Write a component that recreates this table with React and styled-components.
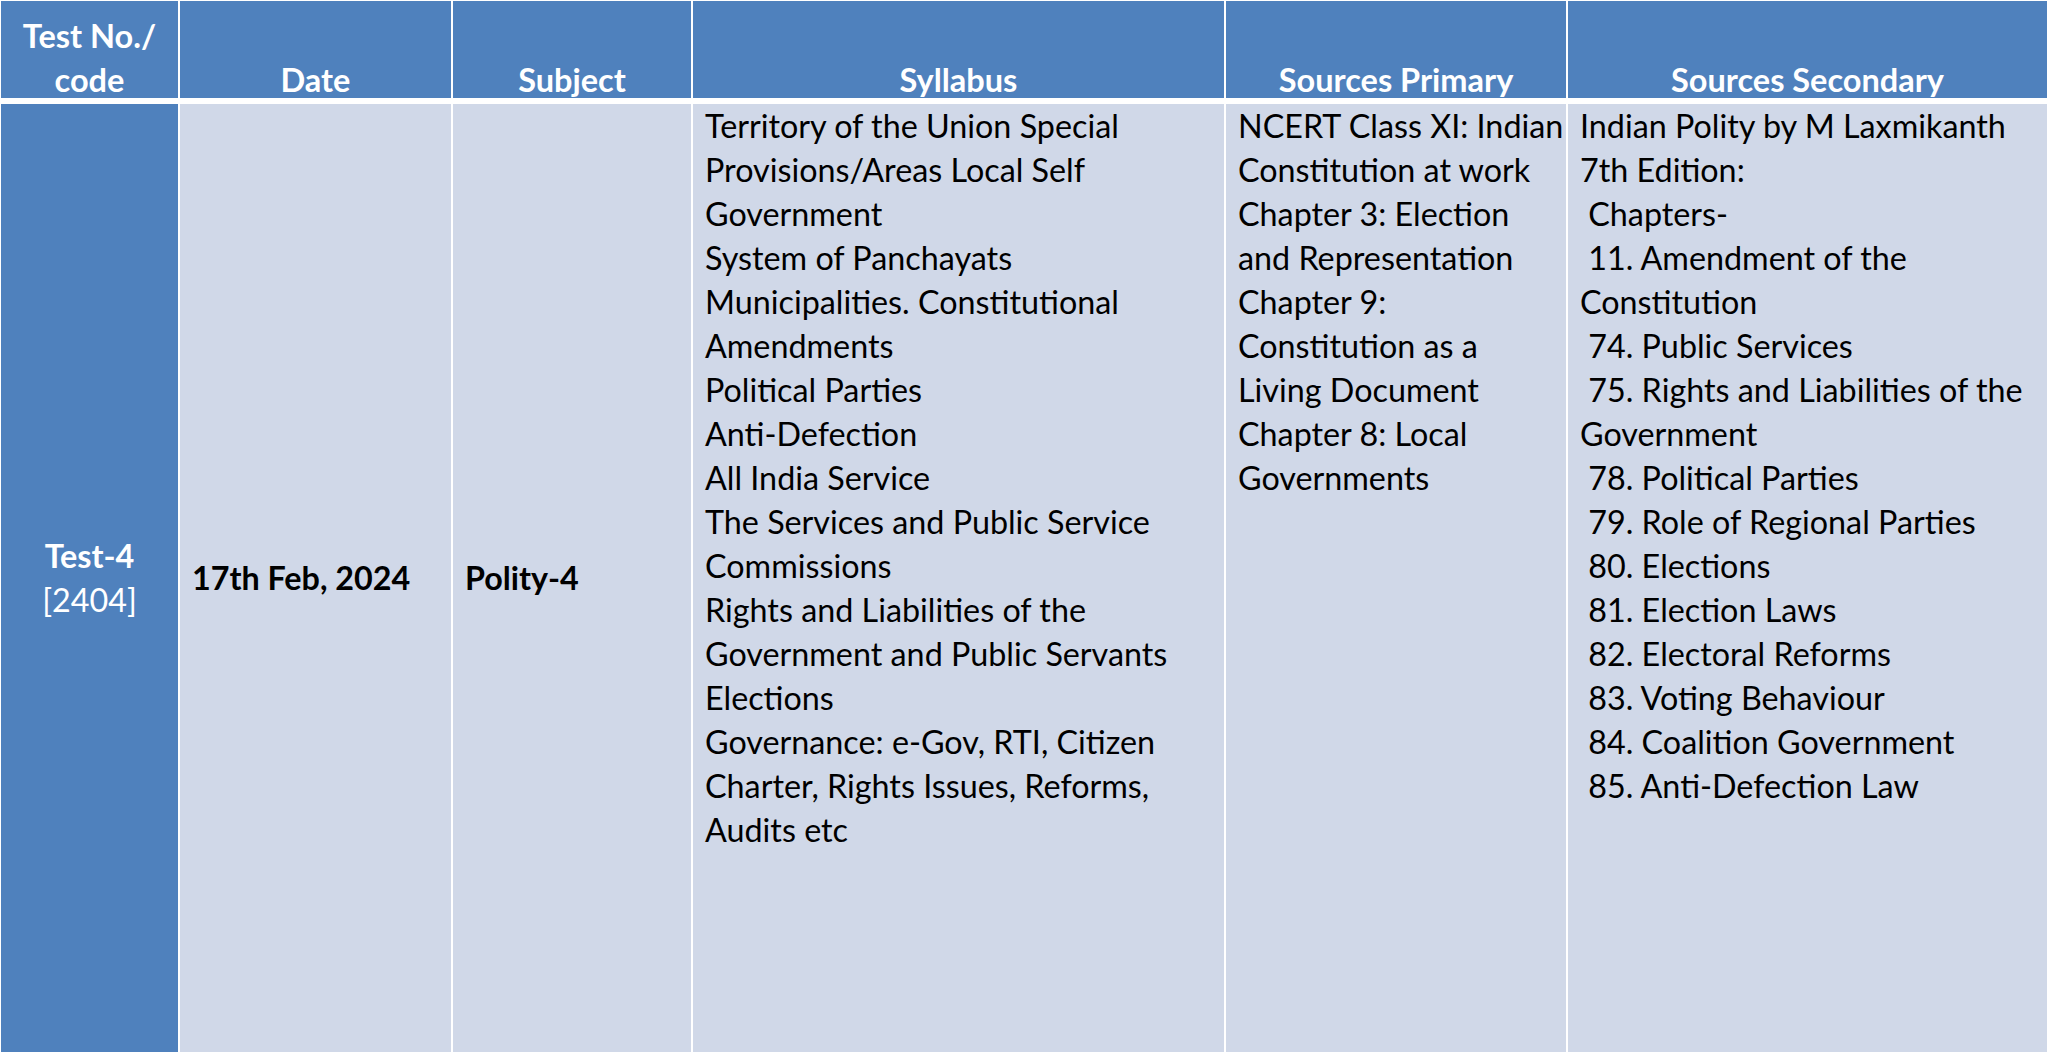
import React from "react";
import styled, { createGlobalStyle } from "styled-components";

const Global = createGlobalStyle`
  html, body { margin: 0; padding: 0; background: #ffffff; }
  body { font-family: Lato, "Open Sans", sans-serif; }
`;

const Table = styled.div`
  display: grid;
  grid-template-columns: 177px 271px 238px 531px 340px 479px;
  grid-template-rows: 97px 948px;
  column-gap: 2px;
  row-gap: 6px;
  padding: 1px 1px 2px 1px;
  width: 2048px;
  box-sizing: border-box;
  background: #ffffff;
`;

const HeadCell = styled.div`
  background: #4f81bd;
  color: #ffffff;
  font-weight: 700;
  font-size: 32.5px;
  line-height: 44px;
  display: flex;
  flex-direction: column;
  justify-content: flex-end;
  align-items: center;
  text-align: center;
  overflow: hidden;
`;

const HeadText = styled.div`
  display: flex;
  flex-direction: column;
  align-items: center;
  margin-bottom: -4px;
`;

const Cell = styled.div`
  background: ${(p) => (p.$accent ? "#4f81bd" : "#d0d8e8")};
  color: ${(p) => (p.$accent ? "#ffffff" : "#000000")};
  font-size: 32.3px;
  line-height: 44px;
  display: flex;
  flex-direction: column;
  justify-content: ${(p) => (p.$middle ? "center" : "flex-start")};
  align-items: ${(p) => (p.$centered ? "center" : "flex-start")};
  padding: ${(p) => (p.$middle ? "0 12px" : "0 12px")};
  box-sizing: border-box;
`;

const Line = styled.span`
  display: block;
  white-space: pre;
  font-weight: ${(p) => (p.$bold ? 700 : "inherit")};
`;

const syllabus = [
  "Territory of the Union Special",
  "Provisions/Areas Local Self",
  "Government",
  "System of Panchayats",
  "Municipalities. Constitutional",
  "Amendments",
  "Political Parties",
  "Anti-Defection",
  "All India Service",
  "The Services and Public Service",
  "Commissions",
  "Rights and Liabilities of the",
  "Government and Public Servants",
  "Elections",
  "Governance: e-Gov, RTI, Citizen",
  "Charter, Rights Issues, Reforms,",
  "Audits etc",
];

const primary = [
  "NCERT Class XI: Indian",
  "Constitution at work",
  "Chapter 3: Election",
  "and Representation",
  "Chapter 9:",
  "Constitution as a",
  "Living Document",
  "Chapter 8: Local",
  "Governments",
];

const secondary = [
  "Indian Polity by M Laxmikanth",
  "7th Edition:",
  " Chapters-",
  " 11. Amendment of the",
  "Constitution",
  " 74. Public Services",
  " 75. Rights and Liabilities of the",
  "Government",
  " 78. Political Parties",
  " 79. Role of Regional Parties",
  " 80. Elections",
  " 81. Election Laws",
  " 82. Electoral Reforms",
  " 83. Voting Behaviour",
  " 84. Coalition Government",
  " 85. Anti-Defection Law",
];

const headers = [
  ["Test No./", "code"],
  ["Date"],
  ["Subject"],
  ["Syllabus"],
  ["Sources Primary"],
  ["Sources Secondary"],
];

export default function App() {
  return (
    <>
      <Global />
      <Table>
        {headers.map((lines, i) => (
          <HeadCell key={i}>
            <HeadText>
              {lines.map((t, j) => (
                <Line key={j}>{t}</Line>
              ))}
            </HeadText>
          </HeadCell>
        ))}

        <Cell $accent $middle $centered>
          <Line $bold>Test-4</Line>
          <Line>[2404]</Line>
        </Cell>
        <Cell $middle>
          <Line $bold>17th Feb, 2024</Line>
        </Cell>
        <Cell $middle>
          <Line $bold>Polity-4</Line>
        </Cell>
        <Cell>
          {syllabus.map((t, i) => (
            <Line key={i}>{t}</Line>
          ))}
        </Cell>
        <Cell>
          {primary.map((t, i) => (
            <Line key={i}>{t}</Line>
          ))}
        </Cell>
        <Cell>
          {secondary.map((t, i) => (
            <Line key={i}>{t}</Line>
          ))}
        </Cell>
      </Table>
    </>
  );
}
